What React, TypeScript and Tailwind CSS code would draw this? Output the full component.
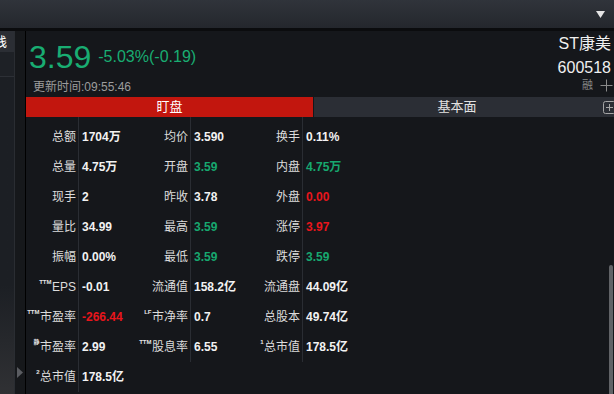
import React from "react";

type Cell = { sup?: string; label: string; value: string; color?: "g" | "r" };

const rows: Cell[][] = [
  [
    { label: "总额", value: "1704万" },
    { label: "均价", value: "3.590" },
    { label: "换手", value: "0.11%" },
  ],
  [
    { label: "总量", value: "4.75万" },
    { label: "开盘", value: "3.59", color: "g" },
    { label: "内盘", value: "4.75万", color: "g" },
  ],
  [
    { label: "现手", value: "2" },
    { label: "昨收", value: "3.78" },
    { label: "外盘", value: "0.00", color: "r" },
  ],
  [
    { label: "量比", value: "34.99" },
    { label: "最高", value: "3.59", color: "g" },
    { label: "涨停", value: "3.97", color: "r" },
  ],
  [
    { label: "振幅", value: "0.00%" },
    { label: "最低", value: "3.59", color: "g" },
    { label: "跌停", value: "3.59", color: "g" },
  ],
  [
    { sup: "TTM", label: "EPS", value: "-0.01" },
    { label: "流通值", value: "158.2亿" },
    { label: "流通盘", value: "44.09亿" },
  ],
  [
    { sup: "TTM", label: "市盈率", value: "-266.44", color: "r" },
    { sup: "LF", label: "市净率", value: "0.7" },
    { label: "总股本", value: "49.74亿" },
  ],
  [
    { sup: "静", label: "市盈率", value: "2.99" },
    { sup: "TTM", label: "股息率", value: "6.55" },
    { sup: "1", label: "总市值", value: "178.5亿" },
  ],
  [{ sup: "2", label: "总市值", value: "178.5亿" }],
];

function valueColor(c?: "g" | "r") {
  if (c === "g") return "text-[#17a86f]";
  if (c === "r") return "text-[#e8151b]";
  return "text-[#f2f2f2]";
}

function Row({ cells, first }: { cells: Cell[]; first: boolean }) {
  return (
    <div className={first ? "flex h-[35px]" : "flex h-[30px]"}>
      {cells.map((c, i) => (
        <React.Fragment key={i}>
          <div
            className={
              first
                ? "w-[52px] pt-[5px] flex items-center justify-end pr-[2px] text-[12px] text-[#dcdcdc] whitespace-nowrap"
                : "w-[52px] flex items-center justify-end pr-[2px] text-[12px] text-[#dcdcdc] whitespace-nowrap"
            }
          >
            {c.sup && (
              <span className="relative -top-[5px] text-[6px] font-bold leading-none text-[#e6e6e6] mr-[0.5px]">
                {c.sup}
              </span>
            )}
            <span>{c.label}</span>
          </div>
          <div
            className={
              (first
                ? "w-[60px] pt-[5px] border-l border-[#2a2d33] flex items-center pl-[3px] text-[12px] font-bold whitespace-nowrap "
                : "w-[60px] border-l border-[#2a2d33] flex items-center pl-[3px] text-[12px] font-bold whitespace-nowrap ") +
              valueColor(c.color)
            }
          >
            {c.value}
          </div>
        </React.Fragment>
      ))}
    </div>
  );
}

export default function App() {
  return (
    <div className="relative w-[614px] h-[394px] overflow-hidden bg-[#15171b] font-['Liberation_Sans','Noto_Sans_CJK_SC',sans-serif]">
      {/* top bar */}
      <div className="h-[28px] bg-linear-to-b from-[#30343b] to-[#24272d] flex items-center justify-end pr-[9px]">
        <svg width="9" height="7" viewBox="0 0 9 7">
          <polygon points="0,0 9,0 4.5,7" fill="#e4e4e4" />
        </svg>
      </div>
      <div className="h-[3px] bg-[#0b0c0e]" />

      <div className="flex h-[363px]">
        {/* left strip */}
        <div className="w-[14px] shrink-0 flex flex-col bg-linear-to-b from-[#1c1f24] from-70% to-[#303134]">
          <div className="relative h-[21px] bg-[#2b2e34] overflow-hidden">
            <span className="absolute left-[-6px] top-[3px] text-[13px] leading-[15px] text-white">栈</span>
          </div>
          <div className="h-[25px] border-b border-[#2d3036] bg-[#1e2126]" />
        </div>
        <div className="w-px shrink-0 bg-[#2a2d32]" />
        <div className="w-[10px] shrink-0 bg-[#16181b] flex flex-col justify-end items-center pb-[16px]">
          <svg width="6" height="11" viewBox="0 0 6 11">
            <polygon points="0,0 6,5.5 0,11" fill="#5a5c61" />
          </svg>
        </div>
        <div className="w-px shrink-0 bg-black" />

        {/* main */}
        <div className="flex-1 min-w-0 flex flex-col">
          {/* header */}
          <div className="h-[66px] flex justify-between">
            <div className="flex flex-col pl-[3px]">
              <div className="mt-[9px] h-[34px] flex items-center">
                <span className="text-[32px] leading-none text-[#19ad72]">3.59</span>
                <span className="ml-[7px] text-[16px] leading-none text-[#19ad72]">-5.03%(-0.19)</span>
              </div>
              <div className="mt-[6px] pl-[4px] h-[14px] leading-[14px] text-[12px] text-[#9c9c9c]">
                更新时间:09:55:46
              </div>
            </div>
            <div className="flex flex-col items-end pr-[3px]">
              <div className="mt-[3px] h-[20px] leading-[20px] text-[16px] text-[#f0f0f0]">ST康美</div>
              <div className="mt-[4px] h-[20px] leading-[20px] text-[16px] text-[#f0f0f0]">600518</div>
              <div className="h-[14px] flex items-center gap-[7px] mr-[-2px]">
                <span className="text-[11px] leading-none text-[#8a8a8a]">融</span>
                <svg width="13" height="13" viewBox="0 0 13 13">
                  <path d="M6.5 0.5V12.5M0.5 6.5H12.5" stroke="#8a8a8a" strokeWidth="1" />
                </svg>
              </div>
            </div>
          </div>

          {/* tabs */}
          <div className="h-[20px] flex">
            <div className="w-[287px] shrink-0 bg-[#c2160e] flex items-center justify-center text-[13px] text-white">
              盯盘
            </div>
            <div className="w-px shrink-0 bg-[#15171b]" />
            <div className="w-[286px] shrink-0 bg-[#2b2e35] flex items-center justify-center text-[13px] text-[#e2e2e2]">
              基本面
            </div>
            <div className="flex-1 min-w-0 bg-[#2b2e35] flex items-center pl-[3px] overflow-hidden">
              <svg width="13" height="13" viewBox="0 0 13 13" className="shrink-0">
                <rect x="0.5" y="0.5" width="12" height="12" rx="2" fill="none" stroke="#a5a5a5" />
                <path d="M6.5 3V10M3 6.5H10" stroke="#a5a5a5" strokeWidth="1" />
              </svg>
            </div>
          </div>

          {/* table */}
          <div className="flex flex-col">
            {rows.map((r, i) => (
              <Row key={i} cells={r} first={i === 0} />
            ))}
          </div>
        </div>
      </div>

      {/* scrollbar */}
      <div className="absolute left-[609px] top-[265px] w-[4px] h-[129px] bg-[#616367] rounded-t-[2px]" />
    </div>
  );
}
